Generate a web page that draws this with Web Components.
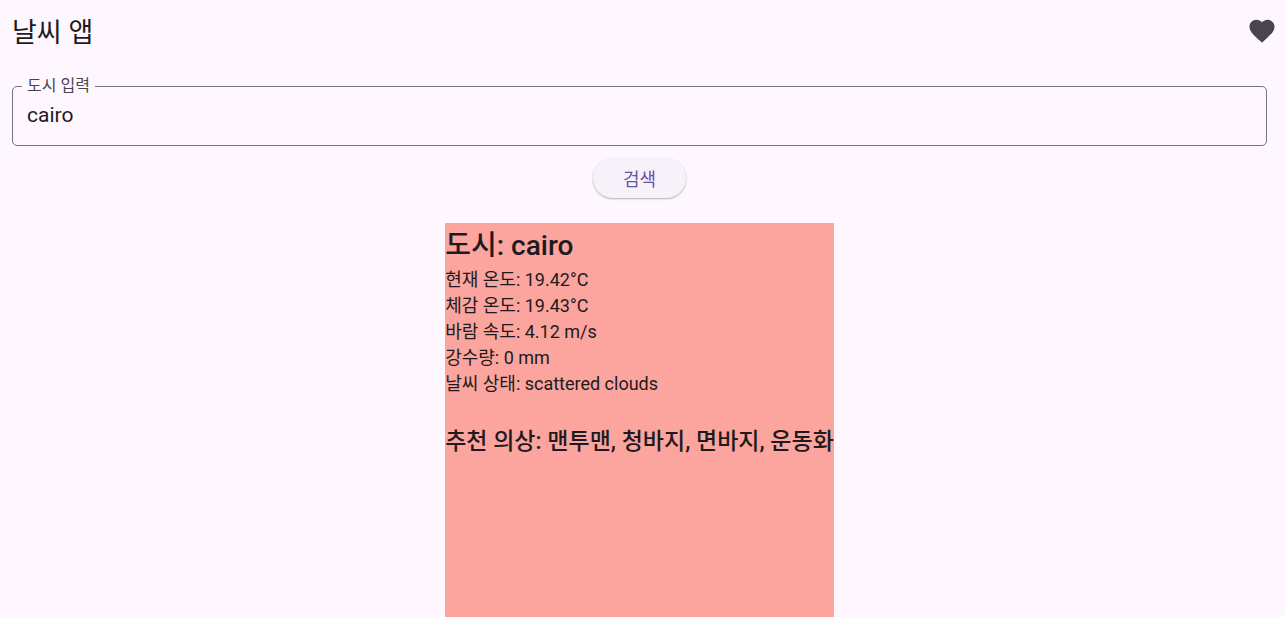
<!DOCTYPE html>
<html lang="ko">
<head>
<meta charset="utf-8">
<meta name="viewport" content="width=device-width, initial-scale=1">
<title>날씨 앱</title>
<style>
  body {
    margin: 0;
    background: #fef7ff;
    color: #1d1b20;
    font-family: Roboto, "Noto Sans CJK KR", sans-serif;
  }
</style>
</head>
<body>
<weather-app></weather-app>
<script>
  const define = (name, html, setup) => {
    const template = document.createElement('template');
    template.innerHTML = html;
    customElements.define(name, class extends HTMLElement {
      constructor() {
        super();
        this.attachShadow({ mode: 'open' }).append(template.content.cloneNode(true));
      }
      connectedCallback() { if (setup) setup(this, this.shadowRoot); }
    });
  };

  define('app-bar', `
    <style>
      :host { display: flex; align-items: center; justify-content: space-between; height: 62px; padding: 0 8px 0 12px; }
      h1 { margin: 0; padding-top: 4px; font-size: 27px; line-height: 36px; font-weight: 400; }
      button { display: flex; padding: 0; border: 0; background: none; color: #49454f; cursor: pointer; }
      svg { display: block; width: 30px; height: 30px; fill: currentColor; }
    </style>
    <h1><slot></slot></h1>
    <button type="button" aria-label="즐겨찾기">
      <svg viewBox="0 0 24 24" aria-hidden="true"><path d="M12 21.35l-1.45-1.32C5.4 15.36 2 12.28 2 8.5 2 5.42 4.42 3 7.5 3c1.74 0 3.41.81 4.5 2.09C13.09 3.81 14.76 3 16.5 3 19.58 3 22 5.42 22 8.5c0 3.78-3.4 6.86-8.55 11.54L12 21.35z"/></svg>
    </button>`);

  define('outlined-field', `
    <style>
      :host { display: block; }
      fieldset { margin: 0; min-width: 0; padding: 0 14px; border: 1px solid #79747e; border-radius: 5px; }
      legend { margin-left: -5px; padding: 0 5px; font-size: 16px; line-height: 20px; color: #49454f; }
      input {
        display: block; box-sizing: border-box; width: 100%; height: 49px; padding: 0 0 12px;
        border: 0; outline: 0; background: none; color: inherit; font: inherit; font-size: 21px;
      }
    </style>
    <fieldset>
      <legend><label for="field"><slot></slot></label></legend>
      <input id="field" type="text">
    </fieldset>`, (host, root) => {
      root.querySelector('input').value = host.getAttribute('value') || '';
    });

  define('elevated-button', `
    <style>
      :host { display: block; }
      button {
        display: block; height: 40px; padding: 4px 30px 0; border: 0; border-radius: 20px;
        background: #f7f2fa; color: #6750a4; font: inherit; font-size: 18px; line-height: 24px;
        box-shadow: 0 1px 2px rgba(0, 0, 0, .3); cursor: pointer;
      }
    </style>
    <button type="button"><slot></slot></button>`);

  define('weather-card', `
    <style>
      :host { display: block; box-sizing: border-box; padding-top: 4px; background: #fca49e; white-space: nowrap; }
    </style>
    <slot></slot>`);

  define('weather-app', `
    <style>
      :host { display: flex; flex-direction: column; min-height: 100vh; }
      main { flex: 1; display: flex; flex-direction: column; align-items: center; padding: 14px 18px 0 12px; }
      outlined-field { align-self: stretch; }
      elevated-button { margin: 12px 0 25px; }
      weather-card { flex: 1; }
      h2 { margin: 0 0 2px; font-size: 28px; line-height: 38px; font-weight: 500; }
      p { margin: 0; font-size: 18px; line-height: 26px; }
      h3 { margin: 29px 0 0; font-size: 23px; line-height: 32px; font-weight: 500; }
    </style>
    <app-bar>날씨 앱</app-bar>
    <main>
      <outlined-field value="cairo">도시 입력</outlined-field>
      <elevated-button>검색</elevated-button>
      <weather-card>
        <h2>도시: cairo</h2>
        <p>현재 온도: 19.42°C</p>
        <p>체감 온도: 19.43°C</p>
        <p>바람 속도: 4.12 m/s</p>
        <p>강수량: 0 mm</p>
        <p>날씨 상태: scattered clouds</p>
        <h3>추천 의상: 맨투맨, 청바지, 면바지, 운동화</h3>
      </weather-card>
    </main>`);
</script>
</body>
</html>
